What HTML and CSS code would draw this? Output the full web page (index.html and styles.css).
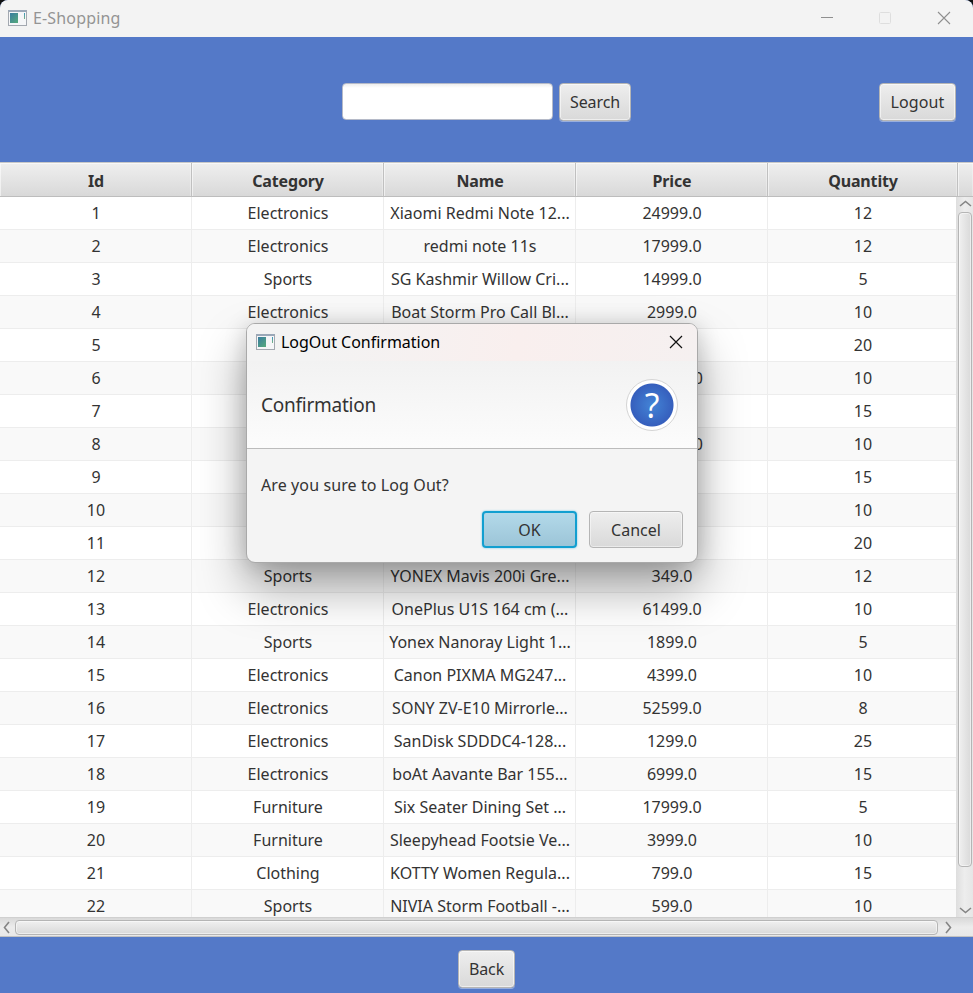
FILE: index.html
```html
<!DOCTYPE html>
<html lang="en">
<head>
<meta charset="utf-8">
<title>E-Shopping</title>
<link rel="stylesheet" href="styles.css">
</head>
<body>
<div class="window">
  <header class="titlebar">
    <span class="app-icon"></span>
    <span class="window-title">E-Shopping</span>
    <svg class="window-controls" width="132" height="14" viewBox="0 0 132 14" fill="none">
      <path d="M1 6.500h12" stroke="#8f8f8f"/>
      <rect x="59.500" y="1.500" width="11" height="11" rx="1" stroke="#dedede"/>
      <path d="M118 1l12 12M130 1l-12 12" stroke="#8f8f8f" stroke-width="1.100"/>
    </svg>
  </header>
  <section class="toolbar">
    <div class="search"><input class="search-input" type="text" aria-label="Search"><button class="btn btn-search">Search</button></div>
    <button class="btn btn-logout">Logout</button>
  </section>
  <main class="table">
    <div class="row head"><span>Id</span><span>Category</span><span>Name</span><span>Price</span><span>Quantity</span><span></span></div>
    <div class="body">
      <div class="rows" id="rows"></div>
      <div class="vbar">
        <svg width="13" height="7" viewBox="0 0 13 7"><path d="M1 6l5.500-4.500L12 6" fill="none" stroke="#858585" stroke-width="1.600"/></svg>
        <div class="vthumb"></div>
        <svg class="down" width="13" height="7" viewBox="0 0 13 7"><path d="M1 1l5.500 4.500L12 1" fill="none" stroke="#858585" stroke-width="1.600"/></svg>
      </div>
    </div>
    <div class="hbar">
      <svg width="7" height="13" viewBox="0 0 7 13"><path d="M6 1L1.500 6.500L6 12" fill="none" stroke="#858585" stroke-width="1.600"/></svg>
      <div class="hthumb"></div>
      <svg width="7" height="13" viewBox="0 0 7 13"><path d="M1 1l4.500 5.500L1 12" fill="none" stroke="#858585" stroke-width="1.600"/></svg>
    </div>
  </main>
  <footer class="footer"><button class="btn btn-back">Back</button></footer>
</div>
<div class="dialog" role="dialog">
  <div class="dialog-title">
    <span class="app-icon"></span><span class="dialog-name">LogOut Confirmation</span>
    <svg width="14" height="14" viewBox="0 0 14 14"><path d="M1 1l12 12M13 1L1 13" stroke="#111" stroke-width="1.200"/></svg>
  </div>
  <div class="dialog-header">
    <span class="dialog-heading">Confirmation</span>
    <span class="question">?</span>
  </div>
  <div class="dialog-message">Are you sure to Log Out?</div>
  <div class="dialog-actions"><button class="btn ok">OK</button><button class="btn cancel">Cancel</button></div>
</div>
<script src="table.js"></script>
</body>
</html>
```
FILE: table.js
```js
const products = [
  ["Electronics", "Xiaomi Redmi Note 12...", "24999.0", 12],
  ["Electronics", "redmi note 11s", "17999.0", 12],
  ["Sports", "SG Kashmir Willow Cri...", "14999.0", 5],
  ["Electronics", "Boat Storm Pro Call Bl...", "2999.0", 10],
  ["", "", "", 20],
  ["", "", "0", 10],
  ["", "", "", 15],
  ["", "", "0", 10],
  ["", "", "", 15],
  ["", "", "", 10],
  ["", "", "", 20],
  ["Sports", "YONEX Mavis 200i Gre...", "349.0", 12],
  ["Electronics", "OnePlus U1S 164 cm (...", "61499.0", 10],
  ["Sports", "Yonex Nanoray Light 1...", "1899.0", 5],
  ["Electronics", "Canon PIXMA MG247...", "4399.0", 10],
  ["Electronics", "SONY ZV-E10 Mirrorle...", "52599.0", 8],
  ["Electronics", "SanDisk SDDDC4-128...", "1299.0", 25],
  ["Electronics", "boAt Aavante Bar 155...", "6999.0", 15],
  ["Furniture", "Six Seater Dining Set ...", "17999.0", 5],
  ["Furniture", "Sleepyhead Footsie Ve...", "3999.0", 10],
  ["Clothing", "KOTTY Women Regula...", "799.0", 15],
  ["Sports", "NIVIA Storm Football -...", "599.0", 10]
];
const rows = document.getElementById("rows");
products.forEach((product, index) => {
  const row = document.createElement("div");
  row.className = "row";
  [index + 1, ...product].forEach(value => {
    const cell = document.createElement("span");
    cell.textContent = value;
    if (value === "0") cell.className = "price-end";
    row.append(cell);
  });
  rows.append(row);
});
```
FILE: styles.css
```css
* { box-sizing: border-box; }
body { margin: 0; background: #111; font-family: "Noto Sans", sans-serif; font-size: 16px; color: #333; overflow: hidden; }
.window { width: 973px; height: 993px; display: flex; flex-direction: column; background: #5479c8; border-radius: 8px 8px 0 0; overflow: hidden; }
.titlebar { height: 37px; flex: none; background: #f3f3f3; display: flex; align-items: center; padding: 0 21px 1px 8px; color: #949494; }
.window-title { margin-left: 6px; letter-spacing: .15px; }
.window-controls { margin-left: auto; }
.app-icon { width: 19px; height: 16px; flex: none; border: 1px solid #a3a8b0; border-top: 2px solid #9ba8b8; background: linear-gradient(#3a96bd, #7ab082) 15px 1px / 1px 6px no-repeat, linear-gradient(135deg, #397ca0, #56aa7c) 1px 1px / 8px 10px no-repeat, #f5f6f8; }
.toolbar { height: 125px; flex: none; display: grid; grid-template-columns: 342px 1fr auto; align-items: center; padding: 5px 17px 0 0; }
.search { grid-column: 2; display: flex; gap: 6px; }
.search-input { width: 211px; height: 37px; border: 1px solid #b5bac8; border-radius: 4px; background: linear-gradient(#eee, #fff 4px); outline: none; padding: 0 10px; }
.btn { font: inherit; color: #333; height: 38px; padding: 0 0 1px; border: 1px solid #b5b5b5; border-radius: 4px; background: linear-gradient(#eee, #d9d9d9); box-shadow: inset 0 0 0 1px rgba(255,255,255,.55), 0 1px 0 rgba(255,255,255,.4); letter-spacing: -.1px; }
.btn-search { width: 72px; }
.btn-logout { width: 77px; letter-spacing: .1px; }
.table { height: 775px; flex: none; background: #fff; display: flex; flex-direction: column; }
.row { height: 33px; display: grid; grid-template-columns: repeat(4, 192px) 190px 1fr; }
.row span { padding-left: 1px; border-right: 1px solid #ededed; border-bottom: 1px solid #ededed; text-align: center; line-height: 32px; white-space: nowrap; overflow: hidden; letter-spacing: 0; }
.row .price-end { text-align: right; padding-right: 64px; }
.rows .row:nth-child(even) { background: #f9f9f9; }
.head { height: 35px; flex: none; background: linear-gradient(#efefef, #d8d8d8); border-top: 1px solid #c8c8c8; font-weight: 700; }
.row.head span { line-height: 36px; letter-spacing: -.15px; border-right-color: #c0c0c0; border-bottom-color: #bdbdbd; box-shadow: inset 1px 1px 0 rgba(255,255,255,.55), inset -1px 0 0 rgba(255,255,255,.3); }
.head span:last-child { border-right: 0; }
.body { height: 720px; flex: none; display: grid; grid-template-columns: 956px 17px; overflow: hidden; }
.rows { overflow: hidden; }
.rows .row { width: 973px; }
.vbar { height: 720px; background: linear-gradient(90deg, #dedede, #ededed 50%, #e6e6e6); display: flex; flex-direction: column; align-items: center; padding: 3px 0 3px 1px; }
.vthumb { width: 14px; height: 655px; margin-top: 5px; border: 1px solid #b5b5b5; border-radius: 4px; background: linear-gradient(90deg, #f0f0f0, #d9d9d9); box-shadow: inset 0 0 0 1px rgba(255,255,255,.5); }
.down { margin-top: auto; }
.hbar { height: 20px; flex: none; background: linear-gradient(#d9d9d9, #ececec 50%, #e8e8e8); border-top: 1px solid #d0d0d0; border-bottom: 1px solid #c1c1c1; display: flex; align-items: center; padding-left: 3px; }
.hthumb { width: 923px; height: 15px; margin: 0 7px 0 5px; border: 1px solid #b5b5b5; border-radius: 4px; background: linear-gradient(#f0f0f0, #d9d9d9); box-shadow: inset 0 0 0 1px rgba(255,255,255,.5); }
.footer { height: 56px; flex: none; padding: 13px 0 0 458px; }
.btn-back { width: 57px; display: block; }
.dialog { position: absolute; left: 246px; top: 323px; width: 452px; height: 240px; border: 1px solid #a9a9a9; border-radius: 9px; background: #f4f4f4; overflow: hidden; box-shadow: 0 26px 48px rgba(0,0,0,.34), 0 2px 22px rgba(0,0,0,.17); }
.dialog-title { height: 37px; display: flex; align-items: center; padding: 0 14px 2px 9px; color: #000; background: linear-gradient(100deg, #f3f3f3 15%, #f9efee 60%, #f5f0f0); }
.dialog-name { margin: 0 auto 0 6px; letter-spacing: -.02px; }
.dialog-header { height: 88px; display: flex; align-items: center; justify-content: space-between; padding: 0 19px 0 14px; background: linear-gradient(#f2f2f2, #fcfcfc); border-bottom: 1px solid #bcbcbc; }
.dialog-heading { font-size: 19px; letter-spacing: -.25px; }
.question { width: 52px; height: 52px; border: 1px solid #d5d5d5; border-radius: 50%; color: #fff; text-align: center; font-family: "Open Sans", sans-serif; font-size: 34px; line-height: 51px; background: radial-gradient(circle, #4384d6 0, #365fbd 21px, #fff 22px); }
.dialog-message { height: 62px; padding: 24px 14px 0; line-height: 24px; letter-spacing: .1px; }
.dialog-actions { display: flex; justify-content: flex-end; gap: 12px; padding-right: 14px; }
.dialog-actions .btn { width: 94px; height: 37px; padding: 1px 0 0; letter-spacing: 0; box-shadow: inset 0 0 0 1px rgba(255,255,255,.45); }
.dialog-actions .ok { width: 95px; border: 2px solid #129fd0; background: linear-gradient(#b3d9e9, #9cc5d8); box-shadow: 0 0 2px #5bbfe2; }
```
